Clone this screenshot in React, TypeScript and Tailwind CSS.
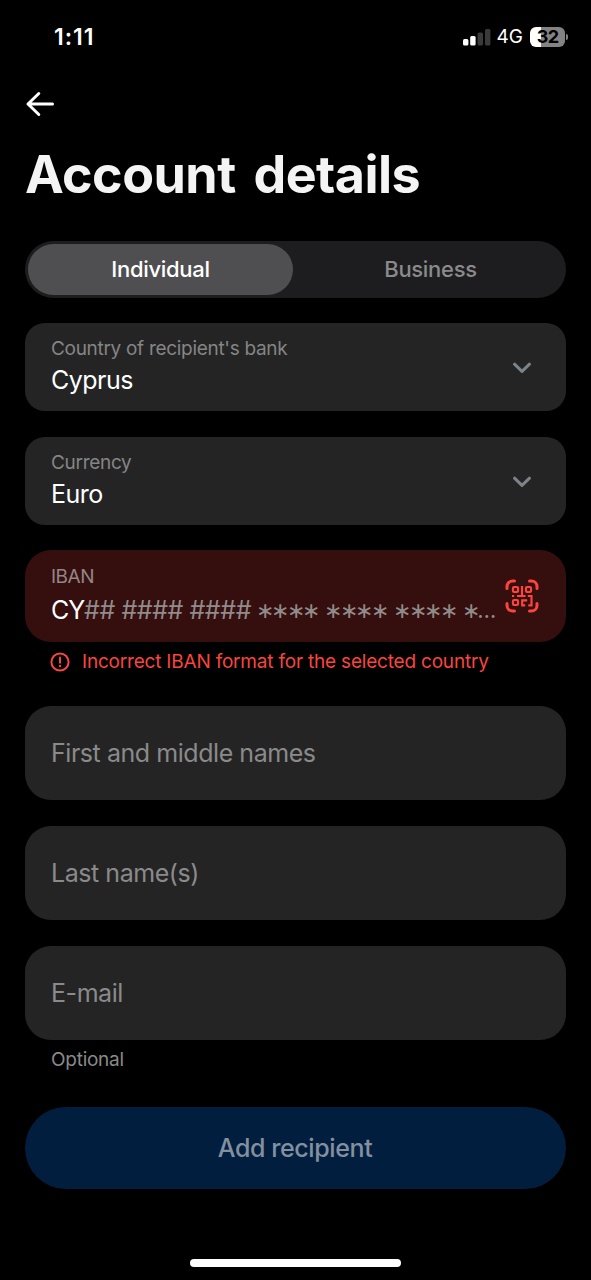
type SelectFieldProps = {
  label: string;
  value: string;
};

function StatusBar() {
  return (
    <div className="flex h-[74px] items-center justify-between pl-[54px] pr-[23px]">
      <span className="text-[23px] leading-[28px] font-semibold tracking-[1px] text-white">1:11</span>
      <div className="flex items-center">
        <svg width="28" height="18" viewBox="0 0 28 18" className="mr-[6px]">
          <rect x="0" y="11" width="5.4" height="6.5" rx="1.5" fill="#fff" />
          <rect x="7.2" y="8" width="5.4" height="9.5" rx="1.5" fill="#fff" />
          <rect x="14.6" y="4.5" width="5.4" height="13" rx="1.5" fill="#3a3a3a" />
          <rect x="22" y="1" width="5.4" height="16.5" rx="1.5" fill="#3a3a3a" />
        </svg>
        <span className="mr-[7px] text-[19px] leading-[24px] text-white">4G</span>
        <div className="flex h-[20px] w-[35px] items-center justify-center rounded-[6px] bg-linear-to-r from-white from-31% to-[#838383] to-31%">
          <span className="text-[18px] leading-[20px] font-bold tracking-[-0.8px] text-black">32</span>
        </div>
        <div className="ml-[1px] h-[6px] w-[2px] rounded-r-full bg-[#838383]" />
      </div>
    </div>
  );
}

function ChevronIcon() {
  return (
    <svg width="20" height="12" viewBox="0 0 20 12" fill="none" className="mt-[2px] mr-[8px]">
      <path d="M2.5 2.2 10 9.4l7.5-7.2" stroke="#7d838a" strokeWidth="3" strokeLinecap="round" strokeLinejoin="round" />
    </svg>
  );
}

function QrScanIcon() {
  return (
    <svg width="34" height="34" viewBox="0 0 34 34" fill="none" stroke="#fb453e" className="shrink-0">
      <path
        d="M2 9.5v-2A5.5 5.5 0 0 1 7.500 2h2M24.500 2h2A5.500 5.500 0 0 1 32 7.500v2M32 24.500v2a5.500 5.500 0 0 1-5.500 5.500h-2M9.500 32h-2A5.500 5.500 0 0 1 2 26.500v-2"
        strokeWidth="3"
        strokeLinecap="round"
      />
      <g strokeWidth="2.2">
        <rect x="8" y="8" width="5" height="5" rx="1" />
        <rect x="21" y="8" width="5" height="5" rx="1" />
        <rect x="8" y="21" width="5" height="5" rx="1" />
        <path d="M17 7v10M12 17h8.500M7 17h2.200M22.800 17h3.700v9.300h-3.200M22.200 21.300h-5v5h3" />
      </g>
    </svg>
  );
}

function SelectField({ label, value }: SelectFieldProps) {
  return (
    <div className="flex h-[88px] items-center justify-between rounded-[20px] bg-[#242424] px-[26px]">
      <div className="-mt-[1px]">
        <div className="text-[19px] leading-[24px] tracking-[-0.3px] text-[#858585]">{label}</div>
        <div className="mt-[3px] text-[25px] leading-[32px] tracking-[-0.5px] text-white">{value}</div>
      </div>
      <ChevronIcon />
    </div>
  );
}

function TextField({ placeholder }: { placeholder: string }) {
  return (
    <div className="flex h-[94px] items-center rounded-[26px] bg-[#242424] px-[26px] text-[25px] leading-[32px] tracking-[-0.45px] text-[#8a8a8a]">
      {placeholder}
    </div>
  );
}

function IbanField() {
  return (
    <div className="flex h-[92px] items-center justify-between rounded-[26px] bg-[#350e0e] pl-[26px] pr-[27px]">
      <div className="-mt-[2px]">
        <div className="text-[19px] leading-[24px] tracking-[-0.5px] text-[#948686]">IBAN</div>
        <div className="mt-[5px] flex text-[25px] leading-[32px] whitespace-pre text-[#918b8b]">
          <span className="tracking-[-1.1px] text-white">CY</span>
          <span className="tracking-[-0.45px]">## #### #### </span>
          <span className="-ml-[2px] text-[22px] tracking-[-2.4px] [word-spacing:2.5px]">∗∗∗∗ ∗∗∗∗ ∗∗∗∗ ∗</span>
          <span className="text-[22px]">…</span>
        </div>
      </div>
      <QrScanIcon />
    </div>
  );
}

export default function App() {
  return (
    <div className="flex h-[1280px] w-[591px] flex-col bg-black font-['Inter','Liberation_Sans',sans-serif]">
      <StatusBar />

      <div className="px-[25px]">
        <div className="flex h-[60px] items-center">
          <svg width="30" height="26" viewBox="0 0 30 26" fill="none" stroke="#fff" strokeWidth="3" strokeLinecap="round" strokeLinejoin="round">
            <path d="M13.800 2.500 3 13l10.800 10.500M3 13h24.500" />
          </svg>
        </div>
        <h1 className="mt-[10px] h-[62px] text-[52px] leading-[62px] font-bold tracking-[-0.55px] whitespace-nowrap text-[#f4f4f4] [word-spacing:6px]">
          Account details
        </h1>

        <div className="mt-[35px] flex h-[57px] rounded-full bg-[#1d1d1f] p-[3px] text-[22px] font-medium tracking-[-0.3px]">
          <div className="flex w-[265px] items-center justify-center rounded-full bg-[#4f4f51] text-white">Individual</div>
          <div className="flex flex-1 items-center justify-center pl-[5px] text-[#8a8a8c]">Business</div>
        </div>

        <div className="mt-[25px] flex flex-col gap-[26px]">
          <SelectField label="Country of recipient's bank" value="Cyprus" />
          <SelectField label="Currency" value="Euro" />
        </div>

        <div className="mt-[25px]">
          <IbanField />
          <div className="mt-[7px] flex h-[25px] items-center pl-[25px] text-[#f8453f]">
            <svg width="20" height="20" viewBox="0 0 20 20" fill="none" stroke="currentColor" strokeWidth="2">
              <circle cx="10" cy="10" r="8.6" />
              <path d="M10 5.400v5.400" strokeLinecap="round" />
              <circle cx="10" cy="14" r="1.2" fill="currentColor" stroke="none" />
            </svg>
            <span className="ml-[12px] text-[19px] leading-[24px] tracking-[-0.2px]">
              Incorrect IBAN format for the selected country
            </span>
          </div>
        </div>

        <div className="mt-[32px] flex flex-col gap-[26px]">
          <TextField placeholder="First and middle names" />
          <TextField placeholder="Last name(s)" />
          <TextField placeholder="E-mail" />
        </div>
        <div className="mt-[8px] pl-[26px] text-[19px] leading-[24px] tracking-[-0.25px] text-[#8a8a8a]">Optional</div>

        <button className="mt-[35px] flex h-[82px] w-full items-center justify-center rounded-full bg-[#021e3e] pt-[1px] pr-[1px] text-[25px] font-medium tracking-[-0.4px] text-[#8290a0]">
          Add recipient
        </button>
      </div>

      <div className="mt-auto mb-[13px] h-[8px] w-[211px] self-center rounded-full bg-white" />
    </div>
  );
}
